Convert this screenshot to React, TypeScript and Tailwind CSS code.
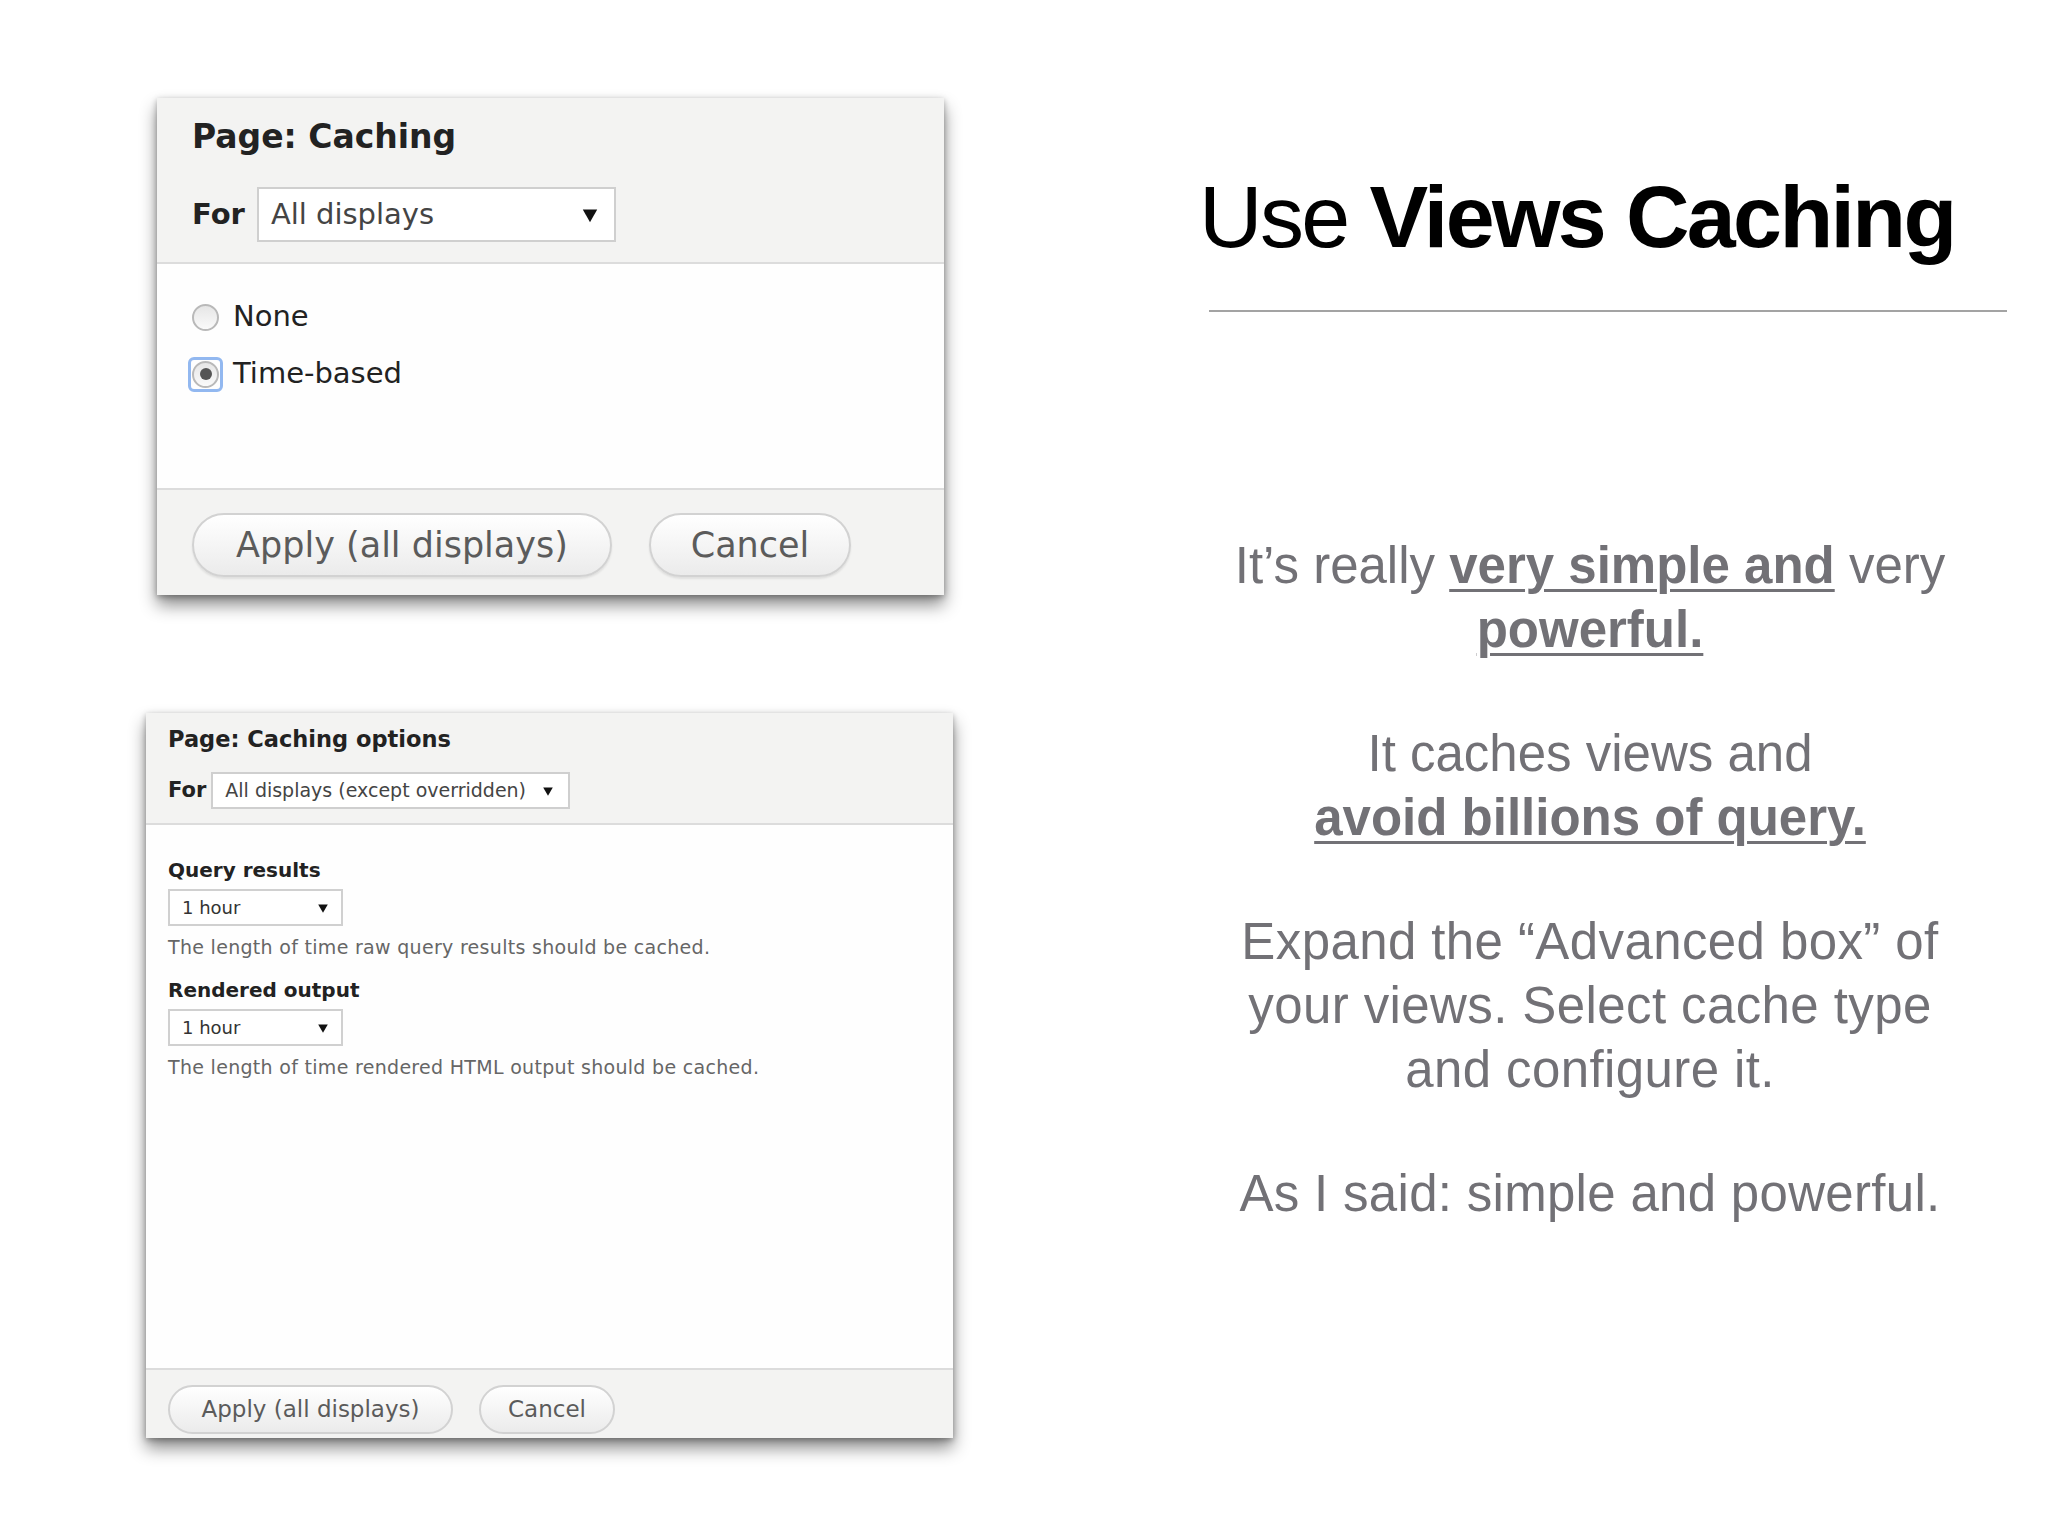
import React from 'react';

const ui = { fontFamily: '"DejaVu Sans", Verdana, sans-serif' };
const slide = { fontFamily: '"Liberation Sans", Arial, Helvetica, sans-serif' };

function Arrow({ size }: { size: number }) {
  return (
    <svg width={size} height={size} viewBox="0 0 10 10" className="shrink-0">
      <path d="M1 2 L9 2 L5 9 Z" fill="#111" />
    </svg>
  );
}

function Radio({ checked }: { checked?: boolean }) {
  const circle = (
    <div className="w-[27px] h-[27px] rounded-full border-2 border-[#b9b9b9] bg-gradient-to-b from-[#e6e6e6] to-[#fafafa] flex items-center justify-center">
      {checked && <div className="w-[12px] h-[12px] rounded-full bg-[#555]" />}
    </div>
  );
  if (!checked) return <div className="w-[35px] flex justify-start">{circle}</div>;
  return (
    <div className="w-[35px] h-[35px] -ml-[4px] rounded-[6px] border-[3px] border-[#92b8f0] flex items-center justify-center">
      {circle}
    </div>
  );
}

function BigCard() {
  return (
    <div className="ml-[157px] w-[787px] bg-[#fefefe] shadow-[0_10px_16px_rgba(0,0,0,0.45),0_2px_6px_rgba(0,0,0,0.3)]" style={ui}>
      <div className="bg-[#f3f3f2] border-b-2 border-[#dcdcdc] pt-[19px] pb-[20px] px-[35px]">
        <div className="text-[33px] leading-[40px] font-bold text-[#222]">Page: Caching</div>
        <div className="mt-[30px] flex items-center gap-[12px]">
          <span className="text-[29px] font-bold text-[#222]">For</span>
          <div className="w-[359px] h-[55px] bg-white border-2 border-[#cfcfcf] flex items-center justify-between pl-[12px] pr-[15px]">
            <span className="text-[29px] text-[#444]">All displays</span>
            <Arrow size={18} />
          </div>
        </div>
      </div>
      <div className="h-[224px] pt-[35px] px-[35px] flex flex-col gap-[21px]">
        <div className="h-[36px] flex items-center">
          <Radio />
          <span className="ml-[6px] text-[29px] text-[#222]">None</span>
        </div>
        <div className="h-[36px] flex items-center">
          <Radio checked />
          <span className="ml-[10px] text-[29px] text-[#222]">Time-based</span>
        </div>
      </div>
      <div className="bg-[#f3f3f2] border-t-2 border-[#dcdcdc] h-[107px] pt-[23px] px-[35px] flex gap-[37px]">
        <button className="w-[420px] h-[64px] rounded-full border-2 border-[#d2d2d2] bg-gradient-to-b from-white to-[#ebebeb] text-[35px] text-[#5b5b5b] shadow-[0_2px_2px_rgba(0,0,0,0.08)]">
          Apply (all displays)
        </button>
        <button className="w-[202px] h-[64px] rounded-full border-2 border-[#d2d2d2] bg-gradient-to-b from-white to-[#ebebeb] text-[35px] text-[#5b5b5b] shadow-[0_2px_2px_rgba(0,0,0,0.08)]">
          Cancel
        </button>
      </div>
    </div>
  );
}

function HourSelect() {
  return (
    <div className="w-[175px] h-[37px] bg-white border-2 border-[#d0d0d0] flex items-center justify-between pl-[12px] pr-[12px]">
      <span className="text-[18px] text-[#333]">1 hour</span>
      <Arrow size={12} />
    </div>
  );
}

function SmallCard() {
  return (
    <div className="mt-[118px] ml-[146px] w-[807px] bg-[#fefefe] shadow-[0_10px_16px_rgba(0,0,0,0.45),0_2px_6px_rgba(0,0,0,0.3)]" style={ui}>
      <div className="bg-[#f3f3f2] border-b-2 border-[#dcdcdc] pt-[12px] pb-[14px] px-[22px]">
        <div className="text-[22.5px] leading-[28px] font-bold text-[#222]">Page: Caching options</div>
        <div className="mt-[19px] flex items-center gap-[5px]">
          <span className="text-[21px] font-bold text-[#222]">For</span>
          <div className="w-[359px] h-[37px] bg-white border-2 border-[#cfcfcf] flex items-center justify-between pl-[12px] pr-[14px]">
            <span className="text-[19px] text-[#444]">All displays (except overridden)</span>
            <Arrow size={12} />
          </div>
        </div>
      </div>
      <div className="h-[543px] pt-[32px] px-[22px] flex flex-col">
        <div className="text-[20px] leading-[26px] font-bold text-[#222]">Query results</div>
        <div className="mt-[6px]">
          <HourSelect />
        </div>
        <div className="mt-[9px] text-[19px] tracking-[0.3px] leading-[24px] text-[#666]">
          The length of time raw query results should be cached.
        </div>
        <div className="mt-[18px] text-[20px] leading-[26px] font-bold text-[#222]">Rendered output</div>
        <div className="mt-[6px]">
          <HourSelect />
        </div>
        <div className="mt-[9px] text-[19px] tracking-[0.3px] leading-[24px] text-[#666]">
          The length of time rendered HTML output should be cached.
        </div>
      </div>
      <div className="bg-[#f3f3f2] border-t-2 border-[#dcdcdc] h-[70px] pt-[15px] px-[22px] flex gap-[26px]">
        <button className="w-[285px] h-[49px] rounded-full border-2 border-[#d2d2d2] bg-gradient-to-b from-white to-[#ebebeb] text-[23px] text-[#5b5b5b]">
          Apply (all displays)
        </button>
        <button className="w-[136px] h-[49px] rounded-full border-2 border-[#d2d2d2] bg-gradient-to-b from-white to-[#ebebeb] text-[23px] text-[#5b5b5b]">
          Cancel
        </button>
      </div>
    </div>
  );
}

const strong = 'font-bold underline decoration-[3px] underline-offset-[6px]';

export default function App() {
  return (
    <div className="w-[2048px] h-[1536px] bg-white flex overflow-hidden">
      <div className="w-[1170px] pt-[98px] flex flex-col items-start">
        <BigCard />
        <SmallCard />
      </div>
      <div className="w-[840px] pt-[167px] flex flex-col" style={slide}>
        <h1 className="ml-[29px] text-[88px] leading-[100px] tracking-[-0.03em] text-black whitespace-nowrap">
          Use <span className="font-bold">Views Caching</span>
        </h1>
        <div className="mt-[43px] ml-[39px] w-[798px] h-[2px] bg-[#a3a3a3]" />
        <div className="mt-[222px] flex flex-col gap-[60px] text-center text-[51px] leading-[64px] text-[#727176]">
          <p>
            It’s really <span className={strong}>very simple and</span> very
            <br />
            <span className={strong}>powerful.</span>
          </p>
          <p>
            It caches views and
            <br />
            <span className={strong}>avoid billions of query.</span>
          </p>
          <p className="tracking-[0.4px]">
            Expand the “Advanced box” of
            <br />
            your views. Select cache type
            <br />
            and configure it.
          </p>
          <p className="tracking-[0.3px]">As I said: simple and powerful.</p>
        </div>
      </div>
    </div>
  );
}
